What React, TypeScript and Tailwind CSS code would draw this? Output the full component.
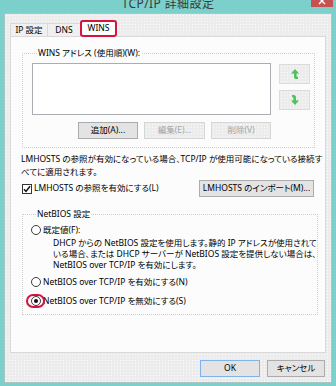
import type { ReactNode } from 'react';

const dither =
  "bg-[#ececec] bg-[radial-gradient(circle,#fbfbfb_0.55px,transparent_0.75px)] bg-[length:3px_3px]";

function Btn({
  children,
  className,
  disabled,
  primary,
}: {
  children: ReactNode;
  className: string;
  disabled?: boolean;
  primary?: boolean;
}) {
  const tone = disabled
    ? `${dither} border-[#d6d6d6] text-[#a3a3a3]`
    : primary
      ? 'bg-[#e3e3e3] border-[#7eb4ea] text-black'
      : 'bg-[#e3e3e3] border-[#acacac] text-black';
  return (
    <div
      className={`h-[17px] border flex items-center justify-center leading-none whitespace-nowrap ${tone} ${className}`}
    >
      {children}
    </div>
  );
}

function Arrow({ down }: { down?: boolean }) {
  return (
    <svg width="8" height="10" viewBox="0 0 8 10" className={down ? '-scale-100' : ''}>
      <path
        d="M4 0 L8 4.5 H5.6 V6.8 Q5.6 8 7 8 V10 H5.4 Q3 10 3 7.4 V4.5 H0 Z"
        fill="#4cc35a"
      />
    </svg>
  );
}

function Radio({ checked, marked }: { checked?: boolean; marked?: boolean }) {
  return (
    <div className="relative w-[10px] h-[10px] shrink-0">
      <div className="w-[10px] h-[10px] rounded-full border border-[#3c3c3c] bg-white flex items-center justify-center">
        {checked && <div className="w-[4px] h-[4px] rounded-full bg-[#111]" />}
      </div>
      {marked && (
        <div className="absolute -left-[5px] -top-[2px] w-[19px] h-[14px] rounded-full border-2 border-[#d8123e]" />
      )}
    </div>
  );
}

export default function App() {
  return (
    <div className="w-[336px] h-[386px] overflow-hidden bg-[#7bd0cb] flex flex-col text-[8.5px] text-black font-['Noto_Sans','Noto_Sans_CJK_JP',sans-serif] [font-feature-settings:'palt']">
      {/* title bar */}
      <div className="relative h-[13px] flex justify-center overflow-hidden">
        <span className="text-[12px] leading-[12px] -mt-[2px] text-[#3a3a3a] tracking-[0.4px]">
          TCP/IP 詳細設定
        </span>
        <div className="absolute right-[3px] top-0 w-[22px] h-[7px] bg-[#c75050] flex justify-center overflow-hidden">
          <svg width="8" height="8" viewBox="0 0 8 8" className="-mt-[3px]">
            <path d="M1 1 L7 7 M7 1 L1 7" stroke="#fff" strokeWidth="1.4" />
          </svg>
        </div>
      </div>

      {/* dialog body */}
      <div className={`flex-1 mx-[4px] mb-[3px] border border-[#a9c6c4] ${dither} flex flex-col px-[5px]`}>
        {/* tabs */}
        <div className="flex items-end pt-[6px]">
          <div className="w-[38px] h-[13px] border border-b-0 border-[#d9d9d9] bg-[#f0f0f0] flex items-center justify-center leading-none">
            IP 設定
          </div>
          <div className="w-[34px] -ml-[1px] h-[13px] border border-b-0 border-[#d9d9d9] bg-[#f0f0f0] flex items-center justify-center leading-none">
            DNS
          </div>
          <div className="relative z-10 -ml-[1px] -mb-[1px] w-[37px] h-[17px] border border-b-0 border-[#d9d9d9] bg-[#fcfcfc] flex items-center justify-center leading-none pb-[2px]">
            WINS
            <div className="absolute -left-[1px] -top-[1px] -right-[1px] bottom-0 rounded-[3px] border-2 border-[#d8123e]" />
          </div>
        </div>

        {/* panel */}
        <div className="h-[317px] border border-[#d9d9d9] bg-[#fcfcfc] px-[11px] pt-[10px]">
          <fieldset className="border border-dotted border-[#cfcfcf] pl-[9px] pr-[4px] pb-[8px]">
            <legend className="ml-[5px] px-[1px] leading-[12px]">WINS アドレス (使用順)(W):</legend>
            <div className="flex gap-[8px] mt-[4px]">
              <div className="flex flex-col">
                <div className="w-[239px] h-[52px] border border-[#abadb3] bg-white" />
                <div className="flex justify-end gap-[6px] mt-[7px]">
                  <Btn className="w-[60px]">追加(A)...</Btn>
                  <Btn className="w-[61px]" disabled>
                    編集(E)...
                  </Btn>
                  <Btn className="w-[60px]" disabled>
                    削除(V)
                  </Btn>
                </div>
              </div>
              <div className="flex flex-col gap-[6px] mt-[1px]">
                <div className={`w-[31px] h-[20px] border border-[#dcdcdc] ${dither} flex items-center justify-center`}>
                  <Arrow />
                </div>
                <div className={`w-[31px] h-[20px] border border-[#dcdcdc] ${dither} flex items-center justify-center`}>
                  <Arrow down />
                </div>
              </div>
            </div>
          </fieldset>

          <p className="mt-[4px] -ml-[1px] leading-[13px] whitespace-nowrap">
            LMHOSTS の参照が有効になっている場合、TCP/IP が使用可能になっている接続す
            <br />
            べてに適用されます。
          </p>

          <div className="flex items-center justify-between mt-[2px]">
            <div className="flex items-center gap-[2px]">
              <div className="w-[10px] h-[10px] border border-[#333] bg-white flex items-center justify-center">
                <svg width="8" height="8" viewBox="0 0 8 8">
                  <path d="M1 4.2 L3 6.4 L7 1.2" fill="none" stroke="#111" strokeWidth="1.5" />
                </svg>
              </div>
              <span className="leading-none">LMHOSTS の参照を有効にする(L)</span>
            </div>
            <Btn className="w-[115px]">LMHOSTS のインポート(M)...</Btn>
          </div>

          <fieldset className="mt-[11px] border border-dotted border-[#cfcfcf] pl-[8px] pb-[7px]">
            <legend className="ml-[5px] px-[1px] leading-[12px]">NetBIOS 設定</legend>
            <div className="flex items-center gap-[2px] h-[12px] mt-[4px]">
              <Radio />
              <span className="leading-none">既定値(F):</span>
            </div>
            <p className="ml-[22px] mt-[1px] leading-[11px] whitespace-nowrap">
              DHCP からの NetBIOS 設定を使用します。静的 IP アドレスが使用されて
              <br />
              いる場合、または DHCP サーバーが NetBIOS 設定を提供しない場合は、
              <br />
              NetBIOS over TCP/IP を有効にします。
            </p>
            <div className="flex items-center gap-[2px] h-[12px] mt-[6px]">
              <Radio />
              <span className="leading-none">NetBIOS over TCP/IP を有効にする(N)</span>
            </div>
            <div className="flex items-center gap-[2px] h-[12px] mt-[7px]">
              <Radio checked marked />
              <span className="leading-none">NetBIOS over TCP/IP を無効にする(S)</span>
            </div>
          </fieldset>
        </div>

        {/* footer buttons */}
        <div className="flex justify-end gap-[7px] mt-[7px] pr-[1px]">
          <Btn className="w-[60px]" primary>
            OK
          </Btn>
          <Btn className="w-[58px]">キャンセル</Btn>
        </div>
      </div>
    </div>
  );
}
